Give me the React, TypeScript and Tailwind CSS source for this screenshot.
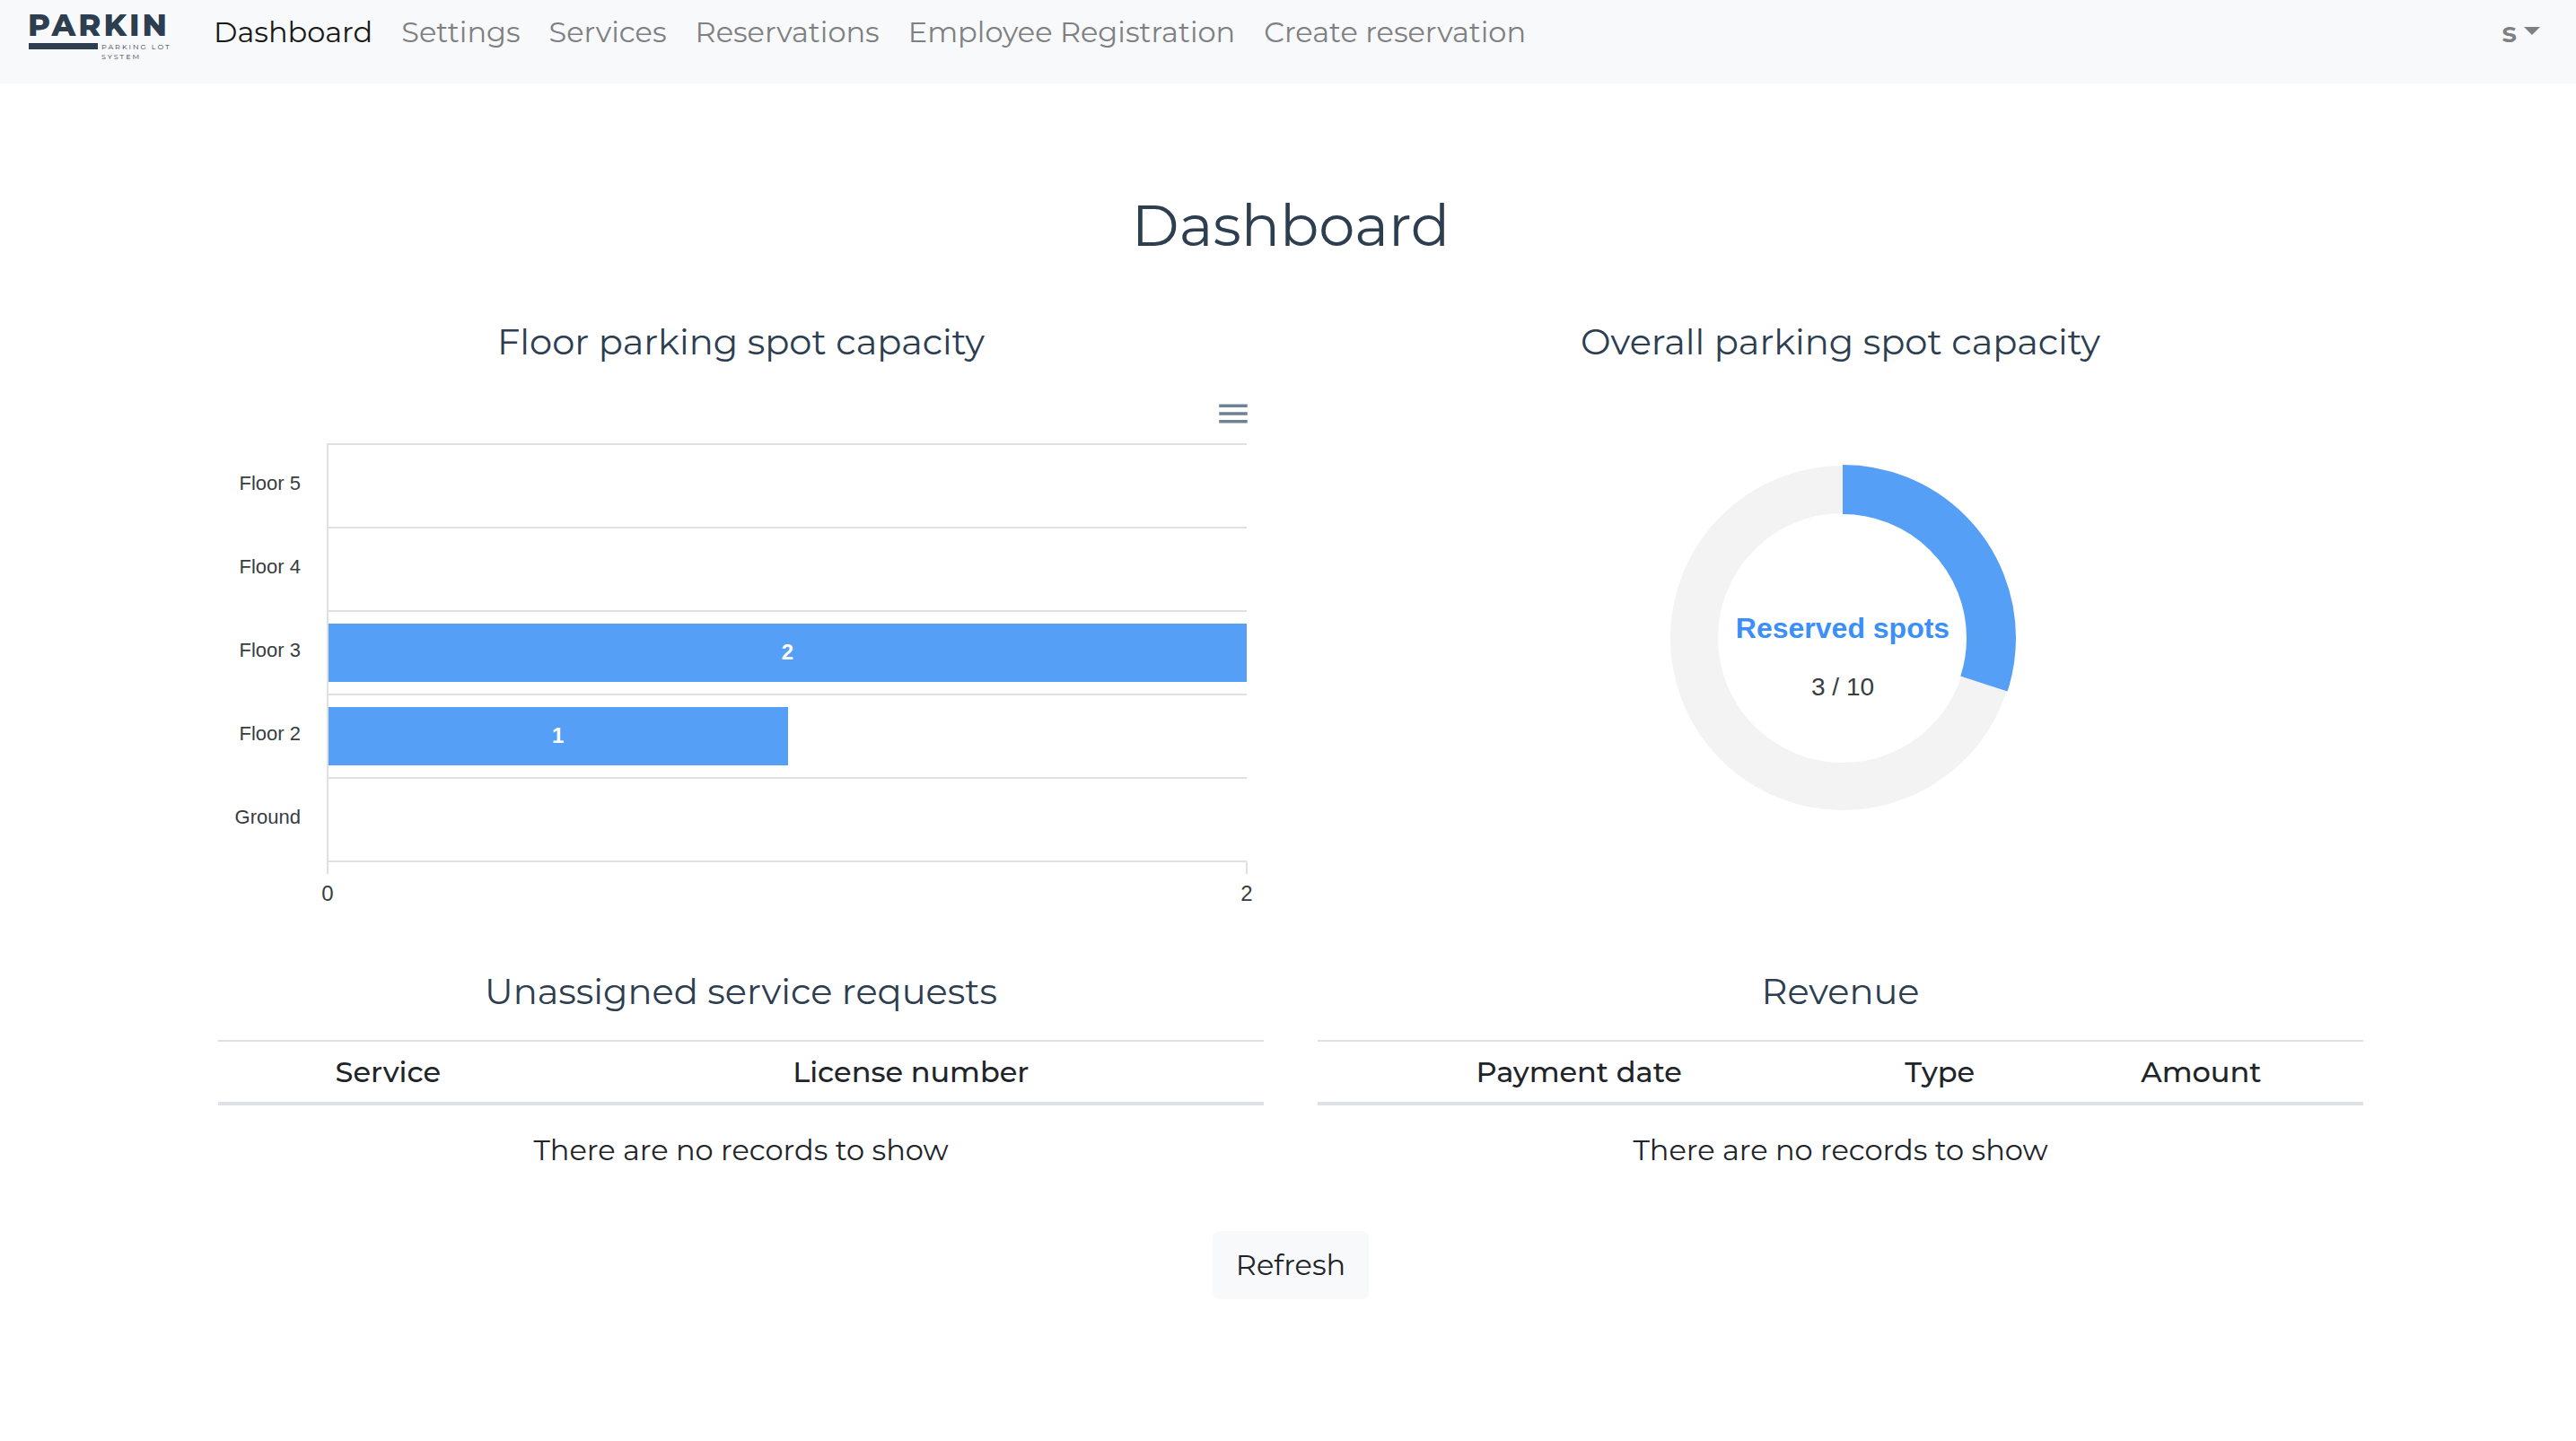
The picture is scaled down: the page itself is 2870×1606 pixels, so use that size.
const links = [
  'Dashboard',
  'Settings',
  'Services',
  'Reservations',
  'Employee Registration',
  'Create reservation',
];

const floors = [
  { name: 'Floor 5', reserved: 0 },
  { name: 'Floor 4', reserved: 0 },
  { name: 'Floor 3', reserved: 2 },
  { name: 'Floor 2', reserved: 1 },
  { name: 'Ground', reserved: 0 },
];

const maxReserved = 2;

function Logo() {
  return (
    <a href="#" aria-label="Parkin" className="block w-[164px] text-[#2c3e50]">
      <svg viewBox="0 -8 164 68" className="block w-full" fontFamily="Montserrat, Inter, sans-serif" fill="currentColor">
        <text x="-1" y="28" fontSize="34" fontWeight="800" letterSpacing="3">
          PARKIN
        </text>
        <rect x="-1" y="36" width="78" height="7" />
        <text x="81" y="43" fontSize="8" letterSpacing="2">
          PARKING LOT
        </text>
        <text x="81" y="54" fontSize="8" letterSpacing="2">
          SYSTEM
        </text>
      </svg>
    </a>
  );
}

function Navbar() {
  return (
    <nav className="flex h-[93px] items-start bg-[#f8f9fb] pt-1 pr-10 pl-8 text-[32px] leading-[48px] text-[#7f8081]">
      <Logo />
      <ul className="mt-2 ml-[42px] flex gap-8">
        {links.map((link, i) => (
          <li key={link}>
            <a href="#" className={i === 0 ? 'text-[#191919]' : ''}>
              {link}
            </a>
          </li>
        ))}
      </ul>
      <button type="button" aria-label="User menu" className="mt-2 ml-auto flex items-center gap-2 font-semibold">
        s
        <svg viewBox="0 0 18 9" className="mb-1 w-[18px]" fill="currentColor">
          <path d="M0 0H18L9 9Z" />
        </svg>
      </button>
    </nav>
  );
}

function SectionTitle({ children }: { children: string }) {
  return <h2 className="text-center text-[40px] leading-[48px] text-[#2c3e50]">{children}</h2>;
}

function FloorChart() {
  return (
    <div className="font-['Helvetica','Liberation_Sans',sans-serif] text-[#373d3f]">
      <div className="mt-[35px] flex justify-end pr-[13px]">
        <button type="button" aria-label="Chart menu" className="text-[#6e8192]">
          <svg viewBox="0 0 24 24" className="block size-[42px]" fill="currentColor">
            <path d="M3 18h18v-2H3v2zm0-5h18v-2H3v2zm0-7v2h18V6H3z" />
          </svg>
        </button>
      </div>
      <div className="mt-3 flex pr-[19px]">
        <div className="w-[121px] pr-[29px] text-right text-[22px]">
          {floors.map((f) => (
            <div key={f.name} className="flex h-[93px] items-center justify-end pb-1">
              {f.name}
            </div>
          ))}
        </div>
        <div className="flex-1 border-b-2 border-l-2 border-[#e0e0e0]">
          {floors.map((f) => (
            <div key={f.name} className="flex h-[93px] items-center border-t-2 border-[#e0e0e0]">
              {f.reserved > 0 && (
                <div
                  className="flex h-[65px] items-center justify-center bg-[#569ff6] pb-0.5 text-2xl font-bold text-white"
                  style={{ width: `${(f.reserved / maxReserved) * 100}%` }}
                >
                  {f.reserved}
                </div>
              )}
            </div>
          ))}
        </div>
      </div>
      <div className="flex justify-between pr-[11px] pl-[114px] text-2xl leading-7">
        {[0, maxReserved].map((tick) => (
          <div key={tick} className="flex w-4 flex-col items-center">
            <div className="mb-2 h-[13px] w-0.5 bg-[#e0e0e0]" />
            {tick}
          </div>
        ))}
      </div>
    </div>
  );
}

function CapacityDonut() {
  return (
    <div className="mt-[113px] flex justify-center pl-1">
      <svg
        viewBox="0 0 386 386"
        className="block w-[386px]"
        fontFamily="Helvetica, 'Liberation Sans', sans-serif"
        textAnchor="middle"
      >
        <circle cx="193" cy="193" r="165.5" fill="none" stroke="#f3f3f3" strokeWidth="53" />
        <circle
          cx="193"
          cy="193"
          r="165.5"
          fill="none"
          stroke="#569ff6"
          strokeWidth="55"
          pathLength="100"
          strokeDasharray="30 70"
          transform="rotate(-90 193 193)"
        />
        <text x="193" y="193" fontSize="32" fontWeight="700" fill="#3a90f8">
          Reserved spots
        </text>
        <text x="193" y="257" fontSize="28" fill="#373d3f">
          3 / 10
        </text>
      </svg>
    </div>
  );
}

function RecordsTable({ title, columns }: { title: string; columns: { name: string; width: string }[] }) {
  return (
    <section>
      <SectionTitle>{title}</SectionTitle>
      <table className="mt-[30px] w-full table-fixed border-separate border-spacing-0 text-center text-[32px] text-[#212529]">
        <thead>
          <tr>
            {columns.map((c) => (
              <th
                key={c.name}
                className={`${c.width} h-[73px] border-t-2 border-b-4 border-[#dee2e6] leading-[48px] font-medium`}
              >
                {c.name}
              </th>
            ))}
          </tr>
        </thead>
        <tbody>
          <tr>
            <td colSpan={columns.length} className="pt-[26px] leading-[48px]">
              There are no records to show
            </td>
          </tr>
        </tbody>
      </table>
    </section>
  );
}

export default function App() {
  return (
    <div className="min-h-screen bg-white font-['Montserrat','Inter',sans-serif]">
      <Navbar />
      <main className="pt-[118px] pr-[237px] pl-[243px]">
        <h1 className="text-center text-[64px] leading-[80px] text-[#2c3e50]">Dashboard</h1>
        <div className="mt-[66px] grid grid-cols-2 gap-x-[60px] gap-y-[71px]">
          <section>
            <SectionTitle>Floor parking spot capacity</SectionTitle>
            <FloorChart />
          </section>
          <section>
            <SectionTitle>Overall parking spot capacity</SectionTitle>
            <CapacityDonut />
          </section>
          <RecordsTable
            title="Unassigned service requests"
            columns={[
              { name: 'Service', width: 'w-[32.5%]' },
              { name: 'License number', width: 'w-[67.5%]' },
            ]}
          />
          <RecordsTable
            title="Revenue"
            columns={[
              { name: 'Payment date', width: 'w-[50%]' },
              { name: 'Type', width: 'w-[19%]' },
              { name: 'Amount', width: 'w-[31%]' },
            ]}
          />
        </div>
        <div className="mt-[66px] flex justify-center">
          <button
            type="button"
            className="rounded-lg bg-[#f8f9fb] px-[26px] py-[14px] text-[32px] leading-[48px] text-[#212529]"
          >
            Refresh
          </button>
        </div>
      </main>
    </div>
  );
}
